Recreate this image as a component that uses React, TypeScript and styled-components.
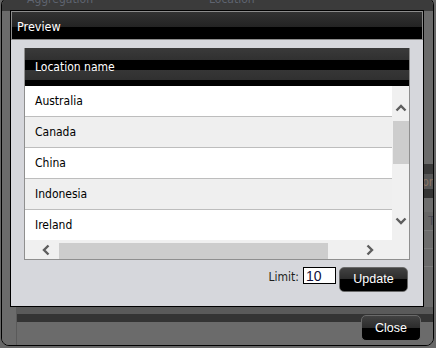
import styled, { createGlobalStyle } from 'styled-components';

const countries = [
	'Australia',
	'Canada',
	'China',
	'Indonesia',
	'Ireland',
	'Japan',
	'Malaysia',
	'New Zealand',
	'Singapore',
	'United Kingdom',
];

const GlobalStyle = createGlobalStyle`
	html, body {
		margin: 0;
		padding: 0;
		background: #676767;
	}
	body {
		width: 436px;
		height: 348px;
		overflow: hidden;
		font-family: 'DejaVu Sans Condensed', 'DejaVu Sans', sans-serif;
	}
	* {
		box-sizing: border-box;
	}
`;

type Dir = 'up' | 'down' | 'left' | 'right';

const rotation: Record<Dir, number> = { up: 0, right: 90, down: 180, left: 270 };

const Chevron = ({ dir }: { dir: Dir }) => {
	const vertical = dir === 'up' || dir === 'down';
	return (
		<svg width={vertical ? 12 : 8} height={vertical ? 8 : 12} viewBox={vertical ? '0 0 12 8' : '0 0 8 12'}>
			<g transform={vertical ? `rotate(${rotation[dir]} 6 4)` : `translate(-2 2) rotate(${rotation[dir]} 6 4)`}>
				<polyline points="1.5,6.5 6,2 10.5,6.5" fill="none" stroke="#5e5e5e" strokeWidth="2.4" />
			</g>
		</svg>
	);
};

const App = () => {
	return (
		<>
			<GlobalStyle />
			<Screen>
				<ParentWindow>
					<ParentTop>
						<FaintLabel $left={25}>Aggregation</FaintLabel>
						<FaintLabel $left={207}>Location</FaintLabel>
					</ParentTop>
					<ParentBody>
						<SideRail />
						<MainPanel>
							<BandArea>
								<Band $h={153} $bg="#6b6b6b" />
								<Band $h={10} $bg="#3a3a3a" />
								<Band $h={15} $bg="#575757">
									<BandText $color="#8a7565">Impressions</BandText>
								</Band>
								<Band $h={9} $bg="#343434" />
								<Band $h={14} $bg="#6d6d6d" />
								<Band $h={19} $bg="#666" $line>
									<BandText $color="#4a4a55">Tracking</BandText>
								</Band>
								<Band $h={18} $bg="#6c6c6c" $line />
								<Band $h={18} $bg="#6a6a6a" $line />
								<Band $h={40} $bg="#6b6b6b" />
							</BandArea>
							<ParentFooter>
								<DarkButton $w={60} $h={26}>Close</DarkButton>
							</ParentFooter>
						</MainPanel>
					</ParentBody>
				</ParentWindow>

				<Dialog>
					<TitleBar>Preview</TitleBar>
					<DialogBody>
						<Table>
							<HeaderRow>Location name</HeaderRow>
							<TableMiddle>
								<Rows>
									{countries.map((name, i) => (
										<Row key={name} $alt={i % 2 === 1}>
											{name}
										</Row>
									))}
								</Rows>
								<VScroll>
									<ArrowZone $pad={18}>
										<Chevron dir="up" />
									</ArrowZone>
									<VThumb />
									<Spacer />
									<ArrowZone $pad={12}>
										<Chevron dir="down" />
									</ArrowZone>
								</VScroll>
							</TableMiddle>
							<TableBottom>
								<HScroll>
									<HArrowZone $pad={17}>
										<Chevron dir="left" />
									</HArrowZone>
									<HThumb />
									<Spacer />
									<HArrowZone $pad={8}>
										<Chevron dir="right" />
									</HArrowZone>
								</HScroll>
								<Corner />
							</TableBottom>
						</Table>
						<FooterRow>
							<LimitLabel>Limit:</LimitLabel>
							<LimitInput defaultValue="10" />
							<DarkButton $w={69} $h={25}>Update</DarkButton>
						</FooterRow>
					</DialogBody>
				</Dialog>
			</Screen>
		</>
	);
};

export default App;

const Screen = styled.div`
	position: relative;
	width: 436px;
	height: 348px;
	padding-left: 1px;
	overflow: hidden;
`;

const ParentWindow = styled.div`
	margin-top: -3px;
	width: 433px;
	height: 349px;
	border: 1px solid #000;
	border-radius: 8px;
	background: #6b6b6b;
	display: flex;
	flex-direction: column;
	overflow: hidden;
`;

const ParentTop = styled.div`
	position: relative;
	height: 13px;
	flex: none;
	background: #3b3b3b;
	overflow: hidden;
`;

const FaintLabel = styled.span<{ $left: number }>`
	position: absolute;
	top: -5px;
	left: ${(p) => p.$left}px;
	font-size: 12px;
	line-height: 12px;
	color: #5f6470;
`;

const ParentBody = styled.div`
	flex: 1;
	display: flex;
`;

const SideRail = styled.div`
	width: 15px;
	flex: none;
	background: #6b6b6b;
	border-right: 1px solid #5a5a5a;
`;

const MainPanel = styled.div`
	flex: 1;
	display: flex;
	flex-direction: column;
`;

const BandArea = styled.div`
	display: flex;
	flex-direction: column;
	border-left: 1px solid #5e5e5e;
`;

const Band = styled.div<{ $h: number; $bg: string; $line?: boolean }>`
	height: ${(p) => p.$h}px;
	background: ${(p) => p.$bg};
	border-bottom: ${(p) => (p.$line ? '1px solid #7a7a7a' : 'none')};
	display: flex;
	align-items: center;
	justify-content: flex-end;
	padding-right: 0;
	overflow: hidden;
`;

const BandText = styled.span<{ $color: string }>`
	font-size: 12px;
	color: ${(p) => p.$color};
	margin-right: -40px;
	white-space: nowrap;
`;

const ParentFooter = styled.div`
	flex: 1;
	display: flex;
	justify-content: flex-end;
	align-items: flex-start;
	padding: 8px 12px 0 0;
	background: linear-gradient(to bottom, #5a5a5a 0, #5a5a5a 7px, #343434 7px, #343434 15px, #6b6b6b 15px);
`;

const DarkButton = styled.button<{ $w: number; $h: number }>`
	width: ${(p) => p.$w}px;
	height: ${(p) => p.$h}px;
	padding: 0;
	border: 1px solid #6a6a6a;
	border-radius: 5px;
	background: linear-gradient(to bottom, #424242 0%, #2c2c2c 48%, #000 50%, #000 100%);
	color: #fff;
	font-family: 'Liberation Sans', Arial, sans-serif;
	font-size: 12.5px;
	line-height: 1;
	cursor: pointer;
`;

const Dialog = styled.div`
	position: absolute;
	left: 10px;
	top: 10px;
	width: 414px;
	height: 297px;
	border: 1px solid #000;
	background: #d6d7dc;
	display: flex;
	flex-direction: column;
`;

const TitleBar = styled.div`
	height: 29px;
	flex: none;
	border: 1px solid #8c8c8c;
	background: linear-gradient(to bottom, #323232 0, #232323 15px, #000 15px, #000 100%);
	color: #fff;
	font-size: 12.5px;
	line-height: 25px;
	padding-left: 5px;
	padding-top: 2px;
`;

const DialogBody = styled.div`
	flex: 1;
	padding: 8px 13px 0 13px;
	display: flex;
	flex-direction: column;
`;

const Table = styled.div`
	border: 1px solid #8f8f8f;
	border-top: none;
	display: flex;
	flex-direction: column;
`;

const HeaderRow = styled.div`
	height: 38px;
	background: linear-gradient(
		to bottom,
		#3a3a3a 0,
		#303030 12px,
		#000 12px,
		#000 22px,
		#363636 22px,
		#303030 32px,
		#000 32px
	);
	color: #fff;
	font-size: 12px;
	line-height: 38px;
	padding-left: 10px;
`;

const TableMiddle = styled.div`
	display: flex;
	height: 154px;
`;

const Rows = styled.div`
	flex: 1;
	overflow: hidden;
`;

const Row = styled.div<{ $alt: boolean }>`
	height: 31px;
	border-bottom: 1px solid #bdbdbd;
	background: ${(p) => (p.$alt ? '#efefef' : '#fff')};
	color: #000;
	font-size: 12px;
	line-height: 30px;
	padding-left: 10px;
`;

const VScroll = styled.div`
	width: 17px;
	flex: none;
	background: #f0f0f0;
	display: flex;
	flex-direction: column;
`;

const ArrowZone = styled.div<{ $pad: number }>`
	height: 35px;
	flex: none;
	display: flex;
	justify-content: center;
	align-items: flex-start;
	padding-top: ${(p) => p.$pad}px;
	padding-left: 1px;
`;

const VThumb = styled.div`
	height: 43px;
	margin-left: 1px;
	background: #cdcdcd;
`;

const Spacer = styled.div`
	flex: 1;
`;

const TableBottom = styled.div`
	display: flex;
	height: 19px;
`;

const HScroll = styled.div`
	flex: 1;
	background: #f0f0f0;
	display: flex;
`;

const HArrowZone = styled.div<{ $pad: number }>`
	width: 34px;
	flex: none;
	display: flex;
	align-items: center;
	padding-left: ${(p) => p.$pad}px;
	padding-top: 1px;
`;

const HThumb = styled.div`
	width: 269px;
	margin-top: 3px;
	background: #cdcdcd;
`;

const Corner = styled.div`
	width: 17px;
	background: #f0f0f0;
`;

const FooterRow = styled.div`
	margin-top: 7px;
	padding-right: 2px;
	display: flex;
	justify-content: flex-end;
	align-items: flex-start;
`;

const LimitLabel = styled.span`
	font-size: 12px;
	line-height: 14px;
	color: #1e1e1e;
	padding-top: 3px;
	margin-right: 4px;
`;

const LimitInput = styled.input`
	width: 33px;
	height: 17px;
	margin: 0 3px 0 0;
	padding: 0 2px;
	border: 1px solid #000;
	background: #fff;
	color: #10103a;
	font-family: 'Liberation Sans', Arial, sans-serif;
	font-size: 14px;
	outline: none;
`;
